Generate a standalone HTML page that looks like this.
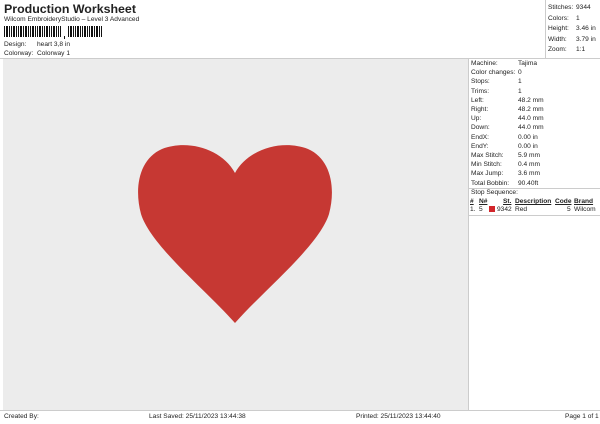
<!DOCTYPE html>
<html><head><style>
body{margin:0;width:600px;height:424px;background:#fff;font-family:"Liberation Sans",sans-serif;position:relative;overflow:hidden;color:#222}
.a{position:absolute;font-size:6.6px;white-space:nowrap}
</style></head><body>
<div class="a" style="left:4px;top:2px;font-size:12.4px;font-weight:bold">Production Worksheet</div>
<div class="a" style="left:4px;top:16px">Wilcom EmbroideryStudio – Level 3 Advanced</div>
<svg style="position:absolute;left:4px;top:26px" width="100" height="14">
<g fill="#111">
<rect x="0" y="0" width="1" height="11"/><rect x="2" y="0" width="2" height="11"/><rect x="5" y="0" width="1" height="11"/><rect x="7" y="0" width="1" height="11"/><rect x="9" y="0" width="2" height="11"/><rect x="12" y="0" width="1" height="11"/><rect x="14" y="0" width="1" height="11"/><rect x="16" y="0" width="2" height="11"/><rect x="19" y="0" width="1" height="11"/><rect x="21" y="0" width="2" height="11"/><rect x="24" y="0" width="1" height="11"/><rect x="26" y="0" width="1" height="11"/><rect x="28" y="0" width="2" height="11"/><rect x="31" y="0" width="1" height="11"/><rect x="33" y="0" width="1" height="11"/><rect x="35" y="0" width="2" height="11"/><rect x="38" y="0" width="1" height="11"/><rect x="40" y="0" width="1" height="11"/><rect x="42" y="0" width="2" height="11"/><rect x="45" y="0" width="1" height="11"/><rect x="47" y="0" width="1" height="11"/><rect x="49" y="0" width="2" height="11"/><rect x="52" y="0" width="1" height="11"/><rect x="54" y="0" width="1" height="11"/><rect x="56" y="0" width="1" height="11"/>
<rect x="60" y="10" width="1" height="3"/>
<rect x="64" y="0" width="1" height="11"/><rect x="66" y="0" width="2" height="11"/><rect x="69" y="0" width="1" height="11"/><rect x="71" y="0" width="1" height="11"/><rect x="73" y="0" width="2" height="11"/><rect x="76" y="0" width="1" height="11"/><rect x="78" y="0" width="1" height="11"/><rect x="80" y="0" width="2" height="11"/><rect x="83" y="0" width="1" height="11"/><rect x="85" y="0" width="1" height="11"/><rect x="87" y="0" width="2" height="11"/><rect x="90" y="0" width="1" height="11"/><rect x="92" y="0" width="2" height="11"/><rect x="95" y="0" width="1" height="11"/><rect x="97" y="0" width="1" height="11"/>
</g></svg>
<div class="a" style="left:4px;top:41px">Design:</div><div class="a" style="left:37px;top:41px">heart 3,8 in</div>
<div class="a" style="left:4px;top:50px">Colorway:</div><div class="a" style="left:37px;top:50px">Colorway 1</div>
<div style="position:absolute;left:545px;top:0;width:1px;height:58px;background:#ccc"></div>
<div style="position:absolute;left:0;top:58px;width:600px;height:1px;background:#ccc"></div>
<div class="a" style="left:548px;top:3px;line-height:10.5px">Stitches:<br>Colors:<br>Height:<br>Width:<br>Zoom:</div>
<div class="a" style="left:576px;top:3px;line-height:10.5px">9344<br>1<br>3.46 in<br>3.79 in<br>1:1</div>
<div style="position:absolute;left:3px;top:59px;width:465px;height:351px;background:#ececec"></div>
<svg style="position:absolute;left:0;top:0" width="600" height="424"><path d="M235,173 C222,149 188,139 162,149 C139,159 134,188 141,214 C151,246 206,290 235,323 C264,290 319,246 329,214 C336,188 331,159 308,149 C282,139 248,149 235,173Z" fill="#c63833"/></svg>
<div style="position:absolute;left:468px;top:59px;width:1px;height:351px;background:#ccc"></div>
<div class="a" style="left:471px;top:59px;line-height:9.2px">Machine:<br>Color changes:<br>Stops:<br>Trims:<br>Left:<br>Right:<br>Up:<br>Down:<br>EndX:<br>EndY:<br>Max Stitch:<br>Min Stitch:<br>Max Jump:<br>Total Bobbin:</div>
<div class="a" style="left:518px;top:59px;line-height:9.2px">Tajima<br>0<br>1<br>1<br>48.2 mm<br>48.2 mm<br>44.0 mm<br>44.0 mm<br>0.00 in<br>0.00 in<br>5.9 mm<br>0.4 mm<br>3.6 mm<br>90.40ft</div>
<div style="position:absolute;left:469px;top:188px;width:131px;height:1px;background:#ccc"></div>
<div class="a" style="left:471px;top:189px">Stop Sequence:</div>
<div class="a" style="left:470px;top:198px;font-weight:bold;text-decoration:underline">#</div>
<div class="a" style="left:479px;top:198px;font-weight:bold;text-decoration:underline">N#</div>
<div class="a" style="left:503px;top:198px;font-weight:bold;text-decoration:underline">St.</div>
<div class="a" style="left:515px;top:198px;font-weight:bold;text-decoration:underline">Description</div>
<div class="a" style="left:555px;top:198px;font-weight:bold;text-decoration:underline">Code</div>
<div class="a" style="left:574px;top:198px;font-weight:bold;text-decoration:underline">Brand</div>
<div class="a" style="left:470px;top:206px">1.</div>
<div class="a" style="left:479px;top:206px">5</div>
<div style="position:absolute;left:489px;top:206px;width:6px;height:6px;background:#d2262b"></div>
<div class="a" style="left:497px;top:206px">9342</div>
<div class="a" style="left:515px;top:206px">Red</div>
<div class="a" style="left:567px;top:206px">5</div>
<div class="a" style="left:574px;top:206px">Wilcom</div>
<div style="position:absolute;left:469px;top:215px;width:131px;height:1px;background:#ccc"></div>
<div style="position:absolute;left:0;top:410px;width:600px;height:1px;background:#ccc"></div>
<div class="a" style="left:4px;top:413px">Created By:</div>
<div class="a" style="left:149px;top:413px">Last Saved: 25/11/2023 13:44:38</div>
<div class="a" style="left:356px;top:413px">Printed: 25/11/2023 13:44:40</div>
<div class="a" style="left:565px;top:413px">Page 1 of 1</div>
</body></html>
